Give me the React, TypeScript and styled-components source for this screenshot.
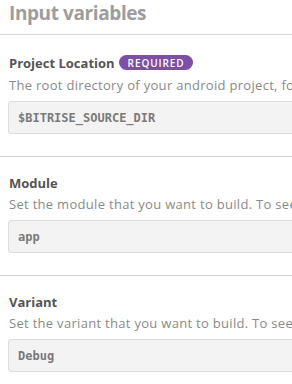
import React from 'react';
import styled, { createGlobalStyle } from 'styled-components';

const GlobalStyle = createGlobalStyle`
  html, body {
    margin: 0;
    padding: 0;
    background: #ffffff;
    overflow: hidden;
  }
  body {
    font-family: "Open Sans", "Liberation Sans", sans-serif;
  }
`;

const Page = styled.div`
  width: 520px;
`;

const Title = styled.h2`
  margin: 0;
  padding: 0 0 7px 9px;
  font-size: 19px;
  line-height: 27px;
  font-weight: 700;
  letter-spacing: -0.4px;
  color: #9d9d9d;
  border-bottom: 1px solid #d6d6d6;
`;

const Section = styled.section`
  padding: 17px 0 22px 8px;
  border-bottom: 1px solid #d6d6d6;
`;

const LabelRow = styled.div<{ $tall?: boolean }>`
  display: flex;
  align-items: center;
  gap: 4px;
  height: ${p => (p.$tall ? '21px' : '18px')};
  margin-bottom: 3px;
`;

const Label = styled.span`
  padding-left: 1px;
  font-size: 13px;
  line-height: 18px;
  font-weight: 700;
  color: #555555;
`;

const Badge = styled.span`
  display: inline-flex;
  align-items: center;
  height: 15px;
  padding: 0 9px;
  border-radius: 8px;
  background: #7d4fa6;
  color: #ffffff;
  font-size: 10px;
  font-weight: 600;
  letter-spacing: 0.9px;
`;

const Description = styled.p`
  margin: 0 0 7px;
  padding-left: 1px;
  font-size: 13px;
  line-height: 18px;
  letter-spacing: 0.3px;
  color: #8a8a8a;
  white-space: nowrap;
`;

const Field = styled.div`
  box-sizing: border-box;
  height: 33px;
  display: flex;
  align-items: center;
  padding-left: 9px;
  background: #f3f3f3;
  border: 1px solid #dcdcdc;
  border-radius: 3px;
  font-family: "DejaVu Sans Mono", "Liberation Mono", monospace;
  font-size: 12px;
  font-weight: 600;
  color: #7a7a7a;
`;

type Variable = {
  label: string;
  required?: boolean;
  description: string;
  value: string;
};

const variables: Variable[] = [
  {
    label: 'Project Location',
    required: true,
    description: 'The root directory of your android project, for example, where your root build gradle file exists',
    value: '$BITRISE_SOURCE_DIR',
  },
  {
    label: 'Module',
    description: 'Set the module that you want to build. To see your available modules, please open your project',
    value: 'app',
  },
  {
    label: 'Variant',
    description: 'Set the variant that you want to build. To see your available variants, please open your project',
    value: 'Debug',
  },
];

const App = () => {
  return (
    <Page>
      <GlobalStyle />
      <Title>Input variables</Title>
      {variables.map(v => (
        <Section key={v.label}>
          <LabelRow $tall={v.required}>
            <Label>{v.label}</Label>
            {v.required && <Badge>REQUIRED</Badge>}
          </LabelRow>
          <Description>{v.description}</Description>
          <Field>{v.value}</Field>
        </Section>
      ))}
    </Page>
  );
};

export default App;
